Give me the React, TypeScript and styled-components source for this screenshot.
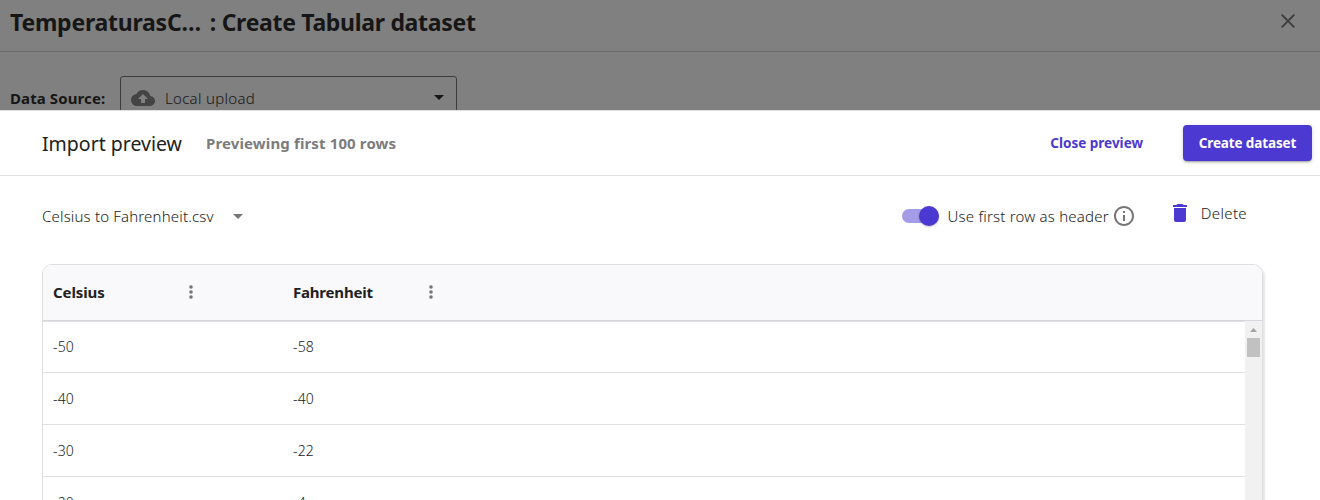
import React from 'react';
import styled, { createGlobalStyle } from 'styled-components';

const GlobalStyle = createGlobalStyle`
  *, *::before, *::after { box-sizing: border-box; }
  html, body { margin: 0; padding: 0; overflow: hidden; }
  body {
    font-family: 'Noto Sans', 'Open Sans', sans-serif;
    color: #212121;
    background: #fff;
  }
  button { font-family: inherit; border: 0; background: none; padding: 0; margin: 0; }
`;

const Page = styled.div`
  display: flex;
  flex-direction: column;
  width: 1320px;
  height: 500px;
  overflow: hidden;
`;

const DimmedArea = styled.section`
  flex: none;
  height: 110px;
  overflow: hidden;
  background: #808080;
  color: #161616;
`;

const DialogHeader = styled.header`
  display: flex;
  align-items: flex-start;
  justify-content: space-between;
  height: 52px;
  padding: 7px 24px 0 10px;
  border-bottom: 1px solid #6e6e6e;
`;

const Title = styled.h1`
  display: flex;
  gap: 9px;
  margin: 0;
  font-size: 23px;
  line-height: 30px;
  font-weight: 700;
`;

const Label = styled.span<{ $spacing?: number }>`
  white-space: pre;
  letter-spacing: ${(p) => p.$spacing ?? 0}px;
`;

const CloseButton = styled.button`
  display: flex;
  margin-top: 6px;
  color: #3c3c3c;
`;

const SourceRow = styled.div`
  display: flex;
  padding: 24px 0 0 10px;
`;

const SourceLabel = styled.strong`
  width: 110px;
  padding-top: 10px;
  font-size: 15px;
  line-height: 24px;
  font-weight: 700;
`;

const SourceSelect = styled.div`
  display: flex;
  align-items: center;
  width: 337px;
  height: 44px;
  padding: 0 12px 0 10px;
  border: 1px solid #3c3c3c;
  border-radius: 3px;
  font-size: 15px;
  font-weight: 340;
  svg { flex: none; }
  svg:first-child { margin-right: 10px; color: #444; }
  svg:last-child { margin: 0 0 2px auto; }
`;

const Panel = styled.main`
  display: flex;
  flex-direction: column;
  flex: 1;
  min-height: 0;
  border-top: 1px solid #e0e0e0;
`;

const PanelBar = styled.div`
  display: flex;
  flex: none;
  align-items: center;
  height: 65px;
  padding: 0 8px 0 42px;
  border-bottom: 1px solid #e0e0e0;
`;

const PanelTitle = styled.h2`
  width: 164px;
  margin: 0;
  padding-top: 2px;
  font-size: 19.5px;
  line-height: 28px;
  font-weight: 400;
`;

const PanelNote = styled.span`
  font-size: 15px;
  line-height: 24px;
  font-weight: 700;
  color: #7c7c7c;
`;

const BarActions = styled.div`
  display: flex;
  align-items: center;
  gap: 40px;
  margin-left: auto;
`;

const TextButton = styled.button`
  font-size: 13.5px;
  line-height: 36px;
  font-weight: 700;
  color: #4c39d2;
`;

const PrimaryButton = styled(TextButton)`
  width: 129px;
  height: 36px;
  border-radius: 4px;
  color: #fff;
  background: #4c39d2;
  box-shadow: 0 2px 2px -1px rgba(0, 0, 0, 0.3), 0 1px 4px rgba(0, 0, 0, 0.16);
`;

const Toolbar = styled.div`
  display: flex;
  flex: none;
  align-items: flex-start;
  height: 88px;
  padding: 24px 73px 0 42px;
  font-size: 15px;
  line-height: 32px;
  font-weight: 340;
`;

const FileSelect = styled.div`
  display: flex;
  align-items: center;
  gap: 19px;
  color: #212121;
  svg { color: #757575; }
`;

const HeaderToggle = styled.div`
  display: flex;
  align-items: center;
  margin-left: auto;
  svg { margin-left: 3px; color: #757575; }
`;

const Switch = styled.span`
  display: flex;
  align-items: center;
  justify-content: flex-end;
  width: 34px;
  height: 14px;
  margin-right: 12px;
  border-radius: 7px;
  background: #a59ce8;
`;

const Knob = styled.span`
  flex: none;
  width: 20px;
  height: 20px;
  margin-right: -3px;
  border-radius: 50%;
  background: #4c39d2;
  box-shadow: 0 1px 2px rgba(0, 0, 0, 0.25);
`;

const DeleteButton = styled.button`
  display: flex;
  align-items: center;
  height: 26px;
  margin-left: 32px;
  font-size: 15px;
  font-weight: 340;
  color: #212121;
  svg { margin-right: 9px; color: #4c39d2; }
`;

const Table = styled.div`
  display: flex;
  flex: none;
  flex-direction: column;
  width: 1221px;
  height: 320px;
  margin-left: 42px;
  border: 1px solid #dedede;
  border-radius: 10px;
  overflow: hidden;
  box-shadow: 2px 2px 2px rgba(0, 0, 0, 0.1);
`;

const HeadRow = styled.div`
  display: flex;
  flex: none;
  align-items: center;
  height: 56px;
  padding-left: 10px;
  border-bottom: 1px solid #d6d6dc;
  background: #f9f9fc;
`;

const HeadCell = styled.div`
  display: flex;
  align-items: center;
  justify-content: space-between;
  width: 240px;
  padding: 0 100px 2px 0;
  font-size: 15px;
  font-weight: 700;
  svg { color: #757575; }
`;

const TableBody = styled.div`
  display: flex;
  flex: 1;
  min-height: 0;
`;

const Rows = styled.div`
  flex: 1;
  border-top: 1px solid #e0e0e0;
`;

const Row = styled.div`
  display: flex;
  align-items: center;
  height: 52px;
  padding: 1px 0 0 10px;
  border-bottom: 1px solid #e0e0e0;
  &:first-child { height: 51px; padding-top: 0; }
`;

const Cell = styled.div`
  width: 240px;
  font-size: 14px;
  line-height: 20px;
  letter-spacing: 0.15px;
  font-weight: 320;
`;

const Scrollbar = styled.div`
  display: flex;
  flex-direction: column;
  align-items: center;
  width: 17px;
  background: #f1f1f1;
`;

const ScrollArrow = styled.svg`
  flex: none;
  display: block;
`;

const ScrollThumb = styled.div`
  width: 13px;
  height: 19px;
  background: #c1c1c1;
`;

const Caret = () => (
  <svg width="10" height="5" viewBox="0 0 10 5"><path d="M0 0h10L5 5z" fill="currentColor" /></svg>
);

const Dots = () => (
  <svg width="4" height="14" viewBox="0 0 4 14" fill="currentColor">
    <circle cx="2" cy="2" r="1.8" /><circle cx="2" cy="7" r="1.8" /><circle cx="2" cy="12" r="1.8" />
  </svg>
);

const columns = [{ name: 'Celsius', spacing: -0.1 }, { name: 'Fahrenheit', spacing: -0.2 }];
const rows = [['-50', '-58'], ['-40', '-40'], ['-30', '-22'], ['-20', '-4']];

export default function App() {
  return (
    <>
      <GlobalStyle />
      <Page>
        <DimmedArea>
          <DialogHeader>
            <Title>
              <Label $spacing={-0.24}>TemperaturasC…</Label>
              <Label $spacing={-0.31}>: Create Tabular dataset</Label>
            </Title>
            <CloseButton aria-label="Close">
              <svg width="16" height="16" viewBox="0 0 16 16" fill="none" stroke="currentColor" strokeWidth="1.9">
                <path d="M1.7 1.7l12.6 12.6M14.3 1.7L1.7 14.3" />
              </svg>
            </CloseButton>
          </DialogHeader>
          <SourceRow>
            <SourceLabel><Label $spacing={0.1}>Data Source:</Label></SourceLabel>
            <SourceSelect>
              <svg width="24" height="24" viewBox="0 0 24 24" fill="currentColor">
                <path d="M19.35 10.04C18.67 6.59 15.64 4 12 4 9.11 4 6.6 5.64 5.35 8.04 2.34 8.36 0 10.91 0 14c0 3.31 2.69 6 6 6h13c2.76 0 5-2.24 5-5 0-2.64-2.05-4.78-4.65-4.96zM14 13v4h-4v-4H7l5-5 5 5h-3z" />
              </svg>
              <Label $spacing={0.3}>Local upload</Label>
              <Caret />
            </SourceSelect>
          </SourceRow>
        </DimmedArea>
        <Panel>
          <PanelBar>
            <PanelTitle><Label>Import preview</Label></PanelTitle>
            <PanelNote><Label $spacing={0.13}>Previewing first 100 rows</Label></PanelNote>
            <BarActions>
              <TextButton><Label>Close preview</Label></TextButton>
              <PrimaryButton><Label $spacing={-0.12}>Create dataset</Label></PrimaryButton>
            </BarActions>
          </PanelBar>
          <Toolbar>
            <FileSelect>
              <Label $spacing={0.17}>Celsius to Fahrenheit.csv</Label>
              <Caret />
            </FileSelect>
            <HeaderToggle>
              <Switch><Knob /></Switch>
              <Label $spacing={0.2}>Use first row as header</Label>
              <svg width="24" height="24" viewBox="0 0 24 24" fill="currentColor">
                <path d="M11 7h2v2h-2zm0 4h2v6h-2zm1-9C6.48 2 2 6.48 2 12s4.48 10 10 10 10-4.48 10-10S17.52 2 12 2zm0 18c-4.41 0-8-3.59-8-8s3.59-8 8-8 8 3.59 8 8-3.59 8-8 8z" />
              </svg>
            </HeaderToggle>
            <DeleteButton>
              <svg width="24" height="24" viewBox="0 0 24 24" fill="currentColor">
                <path d="M6 19c0 1.1.9 2 2 2h8c1.1 0 2-.9 2-2V7H6v12zM19 4h-3.500l-1-1h-5l-1 1H5v2h14V4z" />
              </svg>
              <Label $spacing={0.35}>Delete</Label>
            </DeleteButton>
          </Toolbar>
          <Table>
            <HeadRow>
              {columns.map((c) => (
                <HeadCell key={c.name}><Label $spacing={c.spacing}>{c.name}</Label><Dots /></HeadCell>
              ))}
            </HeadRow>
            <TableBody>
              <Rows>
                {rows.map((r) => (
                  <Row key={r[0]}>{r.map((v, i) => <Cell key={i}>{v}</Cell>)}</Row>
                ))}
              </Rows>
              <Scrollbar>
                <ScrollArrow width="17" height="17" viewBox="0 0 17 17">
                  <path d="M5 11l3.500-4 3.500 4z" fill="#a3a3a3" />
                </ScrollArrow>
                <ScrollThumb />
              </Scrollbar>
            </TableBody>
          </Table>
        </Panel>
      </Page>
    </>
  );
}
